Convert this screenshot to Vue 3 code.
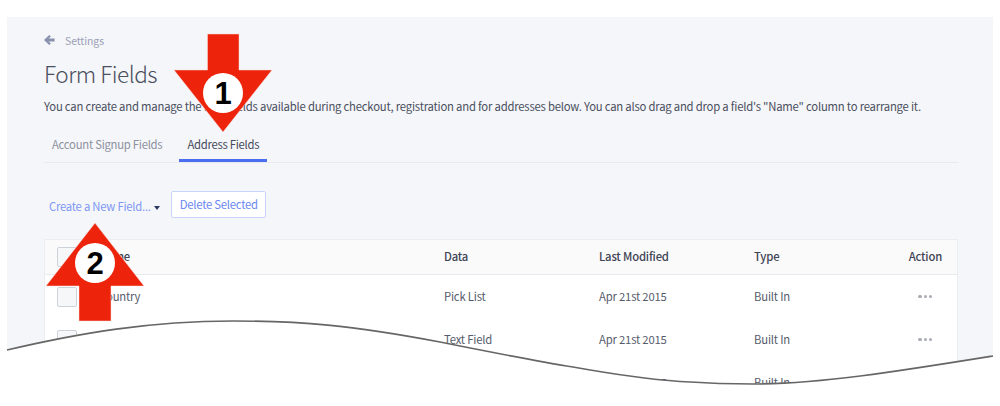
<script setup>
const rows = [
  { name: 'Country', data: 'Pick List', date: 'Apr 21st 2015', type: 'Built In' },
  { name: 'State', data: 'Text Field', date: 'Apr 21st 2015', type: 'Built In' },
  { name: 'Zip', data: 'Text Field', date: 'Apr 21st 2015', type: 'Built In' },
]
</script>

<template>
  <div class="page">
    <main class="panel">
      <nav class="crumb">
        <svg class="back" viewBox="0 0 11 10" width="11" height="10" aria-hidden="true">
          <path d="M5.2 0 L0 5 L5.2 10 L6.9 8.4 L4.7 6.4 H10.6 V3.6 H4.7 L6.9 1.6 Z" fill="#8a91ae" />
        </svg>
        <span>Settings</span>
      </nav>
      <h1 class="title">Form Fields</h1>
      <p class="desc">You can create and manage the form fields available during checkout, registration and for addresses below. You can also drag and drop a field's "Name" column to rearrange it.</p>
      <div class="tabs">
        <a class="tab">Account Signup Fields</a>
        <a class="tab active">Address Fields</a>
      </div>
      <div class="actions">
        <a class="create">Create a New Field...<i class="caret"></i></a>
        <button class="delete" type="button">Delete Selected</button>
      </div>
      <div class="table">
        <div class="row head">
          <div class="cell-check"><span class="check"></span></div>
          <div class="txt">Name</div>
          <div class="txt">Data</div>
          <div class="txt">Last Modified</div>
          <div class="txt">Type</div>
          <div class="txt right">Action</div>
        </div>
        <div v-for="row in rows" :key="row.name" class="row body">
          <div class="cell-check"><span class="check"></span></div>
          <div class="txt">{{ row.name }}</div>
          <div class="txt">{{ row.data }}</div>
          <div class="txt">{{ row.date }}</div>
          <div class="txt">{{ row.type }}</div>
          <div class="dots"><i></i><i></i><i></i></div>
        </div>
      </div>
    </main>

    <svg class="overlay" viewBox="0 0 1000 406" width="1000" height="406" aria-hidden="true">
      <path class="tear" d="M7 350 C80 333 150 321 233 321 C300 321 350 325 440 342 C490 352 530 360 573 367 C612 374 645 379 680 381.5 C705 383 730 384 753 384 C820 384 900 371 993 356 V406 H7 Z" />
      <path class="tear-line" d="M7 350 C80 333 150 321 233 321 C300 321 350 325 440 342 C490 352 530 360 573 367 C612 374 645 379 680 381.5 C705 383 730 384 753 384 C820 384 900 371 993 356" />
      <path class="arrow" d="M207.5 34 H239 V70 H272 L223 132 L174 70 H207.5 Z" />
      <circle cx="223" cy="93" r="20" fill="#fff" />
      <text class="num" x="223" y="104">1</text>
      <path class="arrow" d="M95 223 L144 286 H111 V321 H79 V286 H46 Z" />
      <circle cx="95" cy="263" r="20" fill="#fff" />
      <text class="num" x="95" y="274">2</text>
    </svg>
  </div>
</template>

<style>
html, body { margin: 0; background: #fff; }
</style>

<style scoped>
.page {
  position: relative;
  width: 1000px;
  height: 406px;
  overflow: hidden;
  background: #fff;
  padding: 17px 7px 0;
  box-sizing: border-box;
  font-family: "Noto Sans CJK SC", "Noto Sans", sans-serif;
  color: #4a4f60;
}
.panel {
  height: 389px;
  background: #f5f6f9;
  padding: 16px 35px 0 37px;
  box-sizing: border-box;
  overflow: hidden;
}
.crumb {
  display: flex;
  align-items: center;
  gap: 10px;
  height: 14px;
  font-size: 10.4px;
  letter-spacing: -0.05px;
  color: #9a9fb8;
}
.back { flex: none; margin-top: -1px; }
.title {
  margin: 8px 0 0;
  height: 38px;
  line-height: 38px;
  font-size: 22.6px;
  letter-spacing: -0.5px;
  font-weight: 300;
  color: #4a4f60;
}
.desc {
  margin: 2px 0 0;
  height: 22px;
  line-height: 22px;
  font-size: 11.3px;
  letter-spacing: -0.212px;
  white-space: nowrap;
  color: #4a4f60;
}
.tabs {
  display: flex;
  height: 35px;
  margin-top: 10px;
  border-bottom: 1px solid #e8eaf0;
  font-size: 11.3px;
  letter-spacing: -0.26px;
  line-height: 34px;
}
.tab {
  box-sizing: border-box;
  height: 35px;
  padding: 0 8px;
  margin-right: 9px;
  color: #8d919f;
}
.tab.active {
  color: #454a5a;
  border-bottom: 3px solid #4b6df0;
}
.actions {
  display: flex;
  align-items: flex-start;
  gap: 11px;
  margin-top: 28px;
  padding-left: 5px;
  font-size: 11.3px;
  letter-spacing: -0.24px;
  height: 48px;
}
.create {
  display: flex;
  align-items: center;
  margin-top: 5px;
  height: 20px;
  color: #7f98f3;
}
.caret {
  width: 0;
  height: 0;
  margin: 3px 0 0 3.5px;
  border-left: 3.5px solid transparent;
  border-right: 3.5px solid transparent;
  border-top: 4px solid #2c3a66;
}
.delete {
  width: 95px;
  height: 27px;
  padding: 0 0 2px;
  background: #fff;
  border: 1px solid #c9d5f8;
  border-radius: 2px;
  font: inherit;
  letter-spacing: inherit;
  white-space: nowrap;
  color: #6a87f2;
}
.table {
  background: #fff;
  border: 1px solid #ebedf2;
  border-bottom: 0;
}
.row {
  display: grid;
  grid-template-columns: 54px 345px 155px 155px 125px 1fr;
  align-items: center;
  font-size: 11.3px;
  letter-spacing: -0.2px;
}
.txt { padding-bottom: 2px; }
.row > .cell-check { padding-left: 12px; display: flex; }
.head {
  height: 34px;
  background: #fafafb;
  border-bottom: 1px solid #e8eaf0;
  font-weight: 500;
  color: #3f4454;
}
.body { height: 43px; color: #565b6b; }
.check {
  width: 18px;
  height: 18px;
  background: #f6f7f9;
  border: 1px solid #cdd1da;
  border-radius: 2px;
}
.right { text-align: right; padding-right: 15px; }
.dots {
  display: flex;
  justify-content: flex-end;
  gap: 2px;
  padding-right: 25px;
}
.dots i {
  width: 3.2px;
  height: 3.2px;
  border-radius: 50%;
  background: #a9acb5;
}
.overlay {
  position: absolute;
  inset: 0;
  display: block;
}
.tear { fill: #fff; }
.tear-line { fill: none; stroke: #666; stroke-width: 1.6; }
.arrow { fill: #ee230c; stroke: #f6dcd6; stroke-width: 0.5; }
.num {
  font-family: "Liberation Sans", Arial, sans-serif;
  font-weight: 700;
  font-size: 31px;
  text-anchor: middle;
  fill: #000;
}
</style>
